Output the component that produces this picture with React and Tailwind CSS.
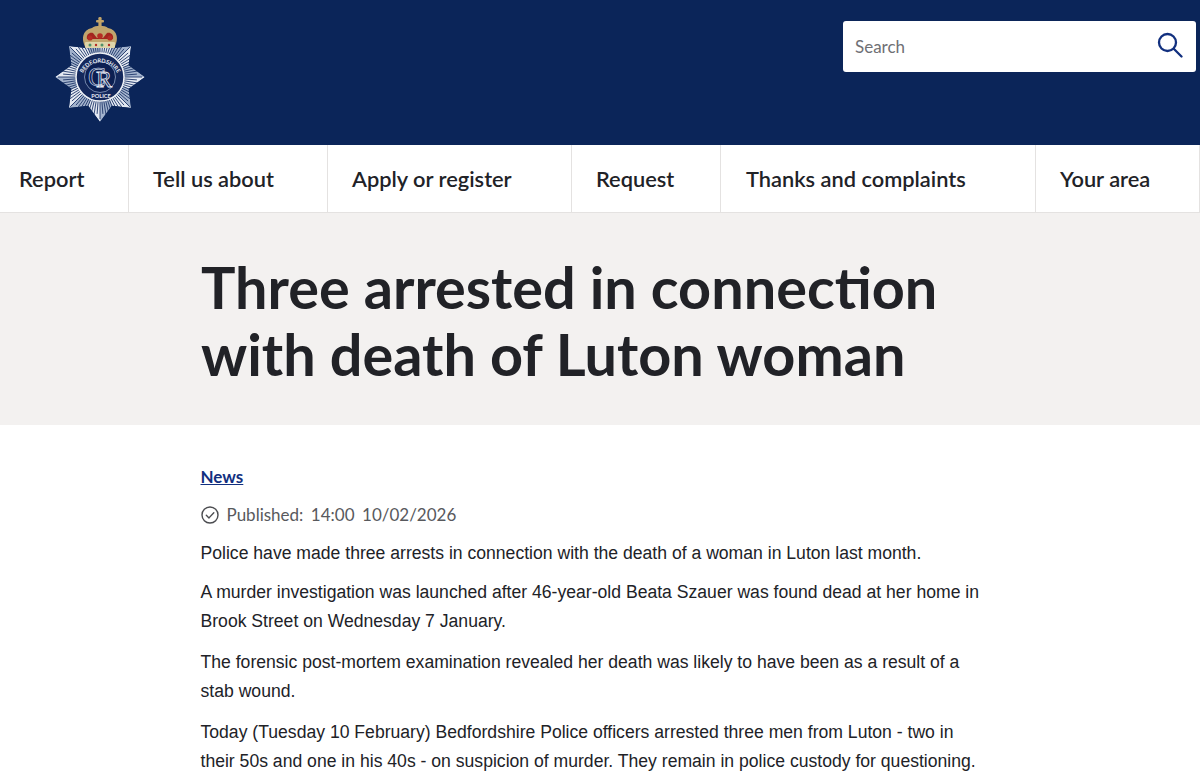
import React from "react";

function Logo() {
  const cx = 100, cy = 77;
  const pt = (r, deg) => {
    const a = (deg * Math.PI) / 180;
    return [cx + r * Math.cos(a), cy + r * Math.sin(a)];
  };
  const starPts = [];
  for (let k = 0; k < 8; k++) {
    const d = k * 45 - 90;
    starPts.push(pt(k % 2 === 0 ? 45 : 44, d).join(","));
    starPts.push(pt(31, d + 22.5).join(","));
  }
  const facets = [];
  for (let k = 0; k < 8; k++) {
    const d = k * 45 - 90;
    const tip = pt(k % 2 === 0 ? 45 : 44, d).join(",");
    const c = `${cx},${cy}`;
    facets.push(<polygon key={`a${k}`} points={`${c} ${tip} ${pt(31, d + 22.5).join(",")}`} fill="#e4e9f2" />);
    facets.push(<polygon key={`b${k}`} points={`${c} ${tip} ${pt(31, d - 22.5).join(",")}`} fill="#a3b3cd" />);
  }
  const rays = [];
  for (let i = 0; i < 80; i++) {
    const d = i * 4.5;
    const [x1, y1] = pt(22, d);
    const [x2, y2] = pt(i % 2 === 0 ? 42 : 37, d);
    rays.push(<line key={i} x1={x1} y1={y1} x2={x2} y2={y2} stroke="#1f3769" strokeWidth="0.9" />);
  }
  return (
    <svg width="100" height="112" viewBox="50 14 100 112" className="block" aria-label="Bedfordshire Police">
      <defs>
        <path id="arcTop" d="M 81 79 A 19.2 19.2 0 0 1 119 79" />
        <clipPath id="starClip"><polygon points={starPts.join(" ")} /></clipPath>
      </defs>
      <g clipPath="url(#starClip)">
        {facets}
        {rays}
      </g>
      <circle cx={cx} cy={cy} r="24" fill="#14285c" stroke="#eef1f6" strokeWidth="1.5" />
      <circle cx={cx} cy={cy} r="15.5" fill="#0c1f52" stroke="#8fa2c3" strokeWidth="0.8" />
      <text fontFamily="Lato, sans-serif" fontSize="5.6" fontWeight="700" fill="#e9edf4">
        <textPath href="#arcTop" startOffset="50%" textAnchor="middle">BEDFORDSHIRE</textPath>
      </text>
      <text x={cx + 1} y="97.5" textAnchor="middle" fontFamily="Lato, sans-serif" fontSize="5.6" fontWeight="700" fill="#e9edf4">POLICE</text>
      <text x="97" y="86" textAnchor="middle" fontFamily="'Liberation Serif', serif" fontSize="27" fill="none" stroke="#c7d1e2" strokeWidth="0.7">C</text>
      <text x="104" y="87" textAnchor="middle" fontFamily="'Liberation Serif', serif" fontSize="24" fill="none" stroke="#e5eaf2" strokeWidth="0.8">R</text>
      <rect x="98.4" y="17" width="3.2" height="10" rx="1.2" fill="#c2a468" />
      <rect x="96" y="20" width="8" height="2.6" rx="1" fill="#c2a468" />
      <path d="M86 48 C81 40 82 30 92 28 C95 25 105 25 108 28 C118 30 119 40 114 48 Z" fill="#c0a56d" />
      <path d="M87 39 C86 34 90 32 93 33 L97 38 L103 38 L107 33 C110 32 114 34 113 39 Z" fill="#a3261f" />
      <circle cx="90" cy="38" r="2.6" fill="#b52d24" />
      <circle cx="100" cy="36" r="2.8" fill="#b52d24" />
      <circle cx="110" cy="38" r="2.6" fill="#b52d24" />
      <rect x="85" y="42" width="30" height="6" rx="1" fill="#ddd5aa" />
      <circle cx="90" cy="45" r="1.5" fill="#4f9168" />
      <circle cx="96" cy="45" r="1.2" fill="#b52d24" />
      <circle cx="102" cy="45" r="1.5" fill="#4f9168" />
      <circle cx="109" cy="45" r="1.2" fill="#b52d24" />
    </svg>
  );
}

const nav = [
  ["Report", "pl-[19px] w-[129px]"],
  ["Tell us about", "pl-6 w-[199px]"],
  ["Apply or register", "pl-6 w-[244px]"],
  ["Request", "pl-6 w-[149px]"],
  ["Thanks and complaints", "pl-[25px] w-[315px]"],
  ["Your area", "pl-6 w-[164px]"],
];

export default function App() {
  return (
    <div className="w-[1200px] h-[783px] overflow-hidden bg-white font-['Lato',sans-serif]">
      <header className="h-[145px] bg-[#0b2559] flex justify-between">
        <div className="pl-[50px] pt-[14px]"><Logo /></div>
        <div className="pt-[21px] pr-[4px]">
          <div className="w-[353px] h-[51px] bg-white rounded-[3px] flex items-center justify-between pl-3 pr-[13px]">
            <span className="text-[17px] text-[#6f7074]">Search</span>
            <svg width="26" height="26" viewBox="0 0 26 26" fill="none" stroke="#12307f" strokeWidth="2.3" strokeLinecap="round" className="mb-[3px]">
              <circle cx="10.5" cy="10.5" r="8.5" />
              <path d="M17 17l7.5 7.5" />
            </svg>
          </div>
        </div>
      </header>
      <nav className="h-[68px] flex border-b border-[#e4e2e1]">
        {nav.map(([label, cls]) => (
          <a key={label} className={`${cls} flex items-center pt-[1px] border-r border-[#e4e2e1] text-[21.8px] font-semibold text-[#212227]`}>{label}</a>
        ))}
      </nav>
      <section className="h-[212px] bg-[#f3f1f0] pl-[201px] pt-[40px]">
        <h1 className="text-[57.6px] leading-[67px] font-bold text-[#212227]">Three arrested in connection<br />with death of Luton woman</h1>
      </section>
      <main className="pl-[200.5px] pt-[40px] w-[1000px]">
        <a className="block text-[17px] leading-[24px] font-bold text-[#12307f] underline">News</a>
        <div className="mt-[14px] flex items-center text-[17px] leading-[24px] text-[#58595d]">
          <svg width="18" height="18" viewBox="0 0 18 18" fill="none" stroke="#4b4c50" strokeWidth="1.4" className="mr-2">
            <circle cx="9" cy="9" r="8" />
            <path d="M5.3 9.2l2.7 2.7 4.8-5.2" strokeLinecap="round" strokeLinejoin="round" />
          </svg>
          <span>Published:</span><span className="ml-[7.5px]">14:00</span><span className="ml-[7.5px]">10/02/2026</span>
        </div>
        <div className="mt-[12px] text-[17.6px] leading-[29px] text-[#212227] font-['Liberation_Sans',sans-serif]">
          <p>Police have made three arrests in connection with the death of a woman in Luton last month.</p>
          <p className="mt-[10px]">A murder investigation was launched after 46-year-old Beata Szauer was found dead at her home in<br />Brook Street on Wednesday 7 January.</p>
          <p className="mt-[12px]">The forensic post-mortem examination revealed her death was likely to have been as a result of a<br />stab wound.</p>
          <p className="mt-[12px]">Today (Tuesday 10 February) Bedfordshire Police officers arrested three men from Luton - two in<br />their 50s and one in his 40s - on suspicion of murder. They remain in police custody for questioning.</p>
        </div>
      </main>
    </div>
  );
}
